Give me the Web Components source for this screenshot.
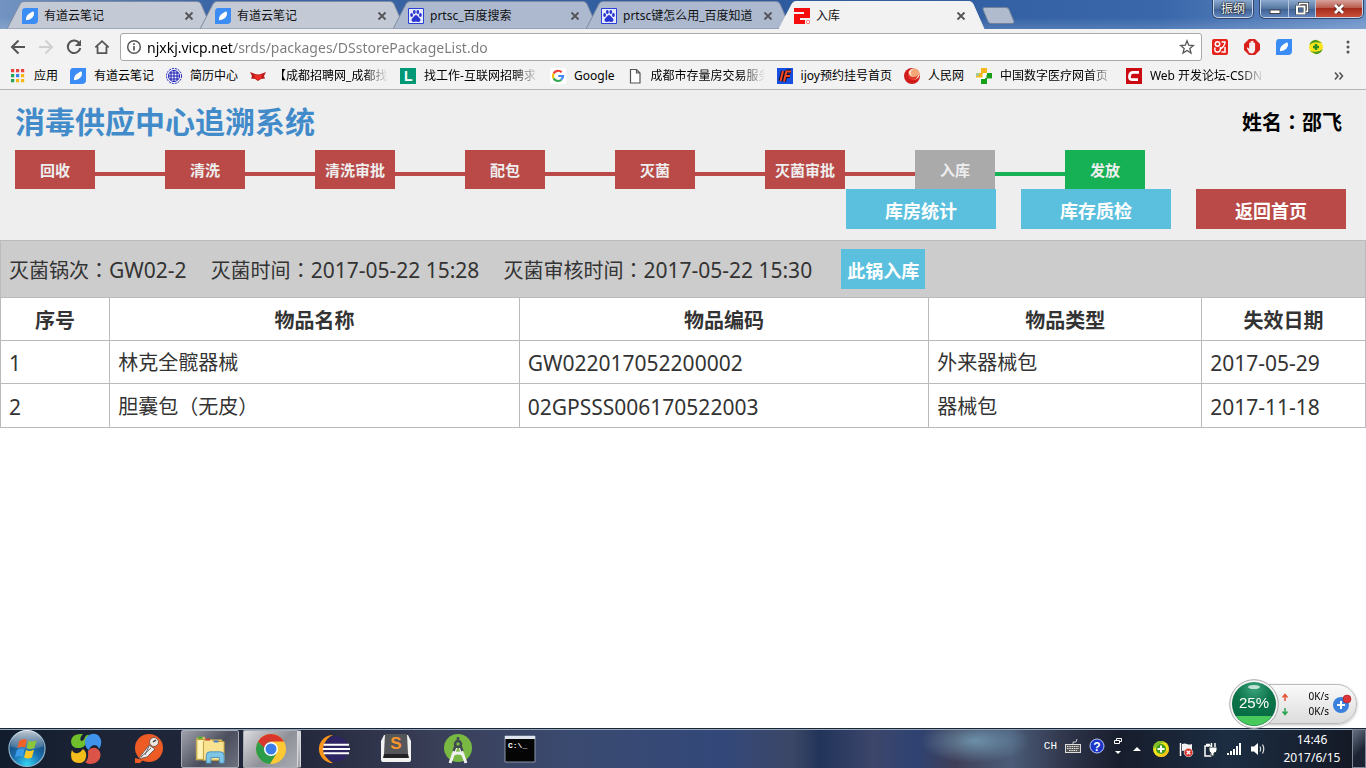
<!DOCTYPE html>
<html lang="zh-CN">
<head>
<meta charset="utf-8">
<title>入库</title>
<style>
html,body{height:100%}
body{margin:0;font-family:"Noto Sans","Noto Sans CJK SC",sans-serif;font-size:12px;color:#000;background:#fff}
</style>
</head>
<body>
<app-desktop></app-desktop>
<script>
const ICONS = {
  note: ['0 0 16 16', '<path d="M3 0h13v12q0 4-4 4H0V4Q0 0 3 0z" fill="#3b8df5"/><path d="M4 12.200q-.5-4 3-6.500l3.500-2.200q1-.3 1.400.8.8 3.200-1.600 5.400Q8 11.900 4 12.200z" fill="#fff"/>'],
  baidu: ['0 0 16 16', '<path d="M.5.500h15v15H.5z" fill="#e8ecff" stroke="#2a3fd8"/><g fill="#2a36d0"><ellipse cx="3.600" cy="7" rx="1.400" ry="1.900"/><ellipse cx="6.300" cy="4" rx="1.400" ry="1.900"/><ellipse cx="9.800" cy="4" rx="1.400" ry="1.900"/><ellipse cx="12.400" cy="7" rx="1.400" ry="1.900"/><path d="M8 7q1.300 0 2.200 1.700.6.900 1.700 1.700 1.300 1.600.2 2.900-1.200 1-4.100.3-2.900.7-4.100-.3-1.100-1.300.2-2.900 1.100-.8 1.700-1.700Q6.700 7 8 7z"/></g>'],
  store: ['0 0 16 16', '<path d="M0 0h16v10H6v2h5v4H0V6h10V4H0z" fill="#f50d0d"/><path d="M12 12h4v4h-4z" fill="#f77"/><path d="M12.500 12.500l3 3m0-3l-3 3" stroke="#fff"/>'],
  close: ['0 0 10 10', '<path d="M1.500 1.500l7 7m0-7l-7 7" stroke="#555" stroke-width="1.800" fill="none"/>'],
  back: ['0 0 16 16', '<path d="M15 8H2m6.500-6.500L2 8l6.500 6.500" stroke="#555" stroke-width="2" fill="none"/>'],
  forward: ['0 0 16 16', '<path d="M1 8h13M7.500 1.500L14 8l-6.500 6.500" stroke="#d0d0d0" stroke-width="2" fill="none"/>'],
  reload: ['0 0 16 16', '<path d="M13.500 4.500A6.300 6.300 0 1 0 14.300 9" stroke="#555" stroke-width="2" fill="none"/><path d="M15 .8v6.200H8.800z" fill="#555"/>'],
  home: ['0 0 18 16', '<path d="M1.500 8.500L9 1.500l7.500 7M4 7.500V15h10V7.500" stroke="#555" stroke-width="2" fill="none"/>'],
  info: ['0 0 16 16', '<circle cx="8" cy="8" r="6.300" stroke="#555" stroke-width="1.500" fill="none"/><path d="M8 7v4.500M8 4.200v1.800" stroke="#555" stroke-width="1.700"/>'],
  star: ['0 0 16 16', '<path d="M8 1.800l1.700 4.400 4.700.3-3.600 3 1.200 4.600L8 11.500l-4 2.600 1.200-4.600-3.600-3 4.700-.3z" fill="none" stroke="#555" stroke-width="1.300"/>'],
  capture: ['0 0 16 16', '<rect width="16" height="16" rx="2" fill="#e6241c"/><g fill="none" stroke="#fff" stroke-width="1.500"><circle cx="5.500" cy="5" r="2.200"/><path d="M9.500 3H13q0 4-4.500 7M3 8.500q-1 4.500 2.500 4.500Q9 13 8.500 8M13 8v5H9.500"/></g>'],
  adblock: ['0 0 16 16', '<path d="M5 0h6l5 5v6l-5 5H5l-5-5V5z" fill="#d8201c"/><path d="M5.500 14L3 9.500q-.4-1.400 1-.8l1.200 1V4q.8-1 1.400 0V2.500q.8-1 1.500 0V2q.8-.8 1.500.3V4q.9-.7 1.500.4V11q-.6 3-2.600 3.500z" fill="#f5eeee"/>'],
  360: ['0 0 16 16', '<circle cx="8" cy="8" r="7" fill="#fae51c"/><path d="M1.500 6A7 7 0 0 1 8 .8L14 4 10 3.500Q5 2.500 1.500 6zM14.500 10A7 7 0 0 1 8 15.200L2 12l4 .7q5 .8 8.500-2.700z" fill="#4c9a22"/><path d="M6.800 5h2.400v1.800H11v2.400H9.200V11H6.800V9.200H5V6.800h1.800z" fill="#288c20"/>'],
  dots: ['0 0 4 16', '<g fill="#555"><circle cx="2" cy="3" r="1.500"/><circle cx="2" cy="8" r="1.500"/><circle cx="2" cy="13" r="1.500"/></g>'],
  apps: ['0 0 16 16', '<path d="M1 1h3.200v3.200H1zM6 1h3.200v3.200H6zM11 1h3.200v3.200H11z" fill="#e8453c"/><path d="M1 6h3.200v3.200H1zM1 11h3.200v3.200H1z" fill="#24a350"/><path d="M6 6h3.200v3.200H6z" fill="#3d82f3"/><path d="M6 11h3.200v3.200H6zM11 6h3.200v3.200H11zM11 11h3.200v3.200H11z" fill="#fbb514"/>'],
  globe: ['0 0 16 16', '<circle cx="8" cy="8" r="7.500" fill="#f4f6ff" stroke="#1818b0" stroke-dasharray="2 1"/><g fill="none" stroke="#1818b0"><circle cx="8" cy="8" r="5.500"/><path d="M4 5h8M3 8h10M4 11h8M8 2v12M5 4v8M11 4v8"/></g>'],
  fox: ['0 0 16 16', '<path d="M0 4l4 1.500Q8 7.500 12 5.500L16 4l-2 4 1 2.500-4 .5-3 2-3-2-4-.5L2 8z" fill="#b81c1c"/><path d="M4 6.500l4 1 4-1-1 4L8 12l-3-1.500z" fill="#f02a25"/>'],
  lagou: ['0 0 16 16', '<path d="M0 0h16v16H0z" fill="#019875"/><text x="4" y="13" font-family="Liberation Sans" font-size="14" font-weight="bold" fill="#fff">L</text>'],
  google: ['0 0 16 16', '<rect width="16" height="16" rx="2" fill="#fff"/><g fill="none" stroke-width="2.200"><path d="M11.700 4.300A5 5 0 0 0 3.600 5.600" stroke="#ea4335"/><path d="M3.600 5.600a5 5 0 0 0 0 4.800" stroke="#fbbc05"/><path d="M3.600 10.400a5 5 0 0 0 7.700 1.300" stroke="#34a853"/><path d="M11.300 11.700A5 5 0 0 0 13 8H8.300" stroke="#4285f4"/></g>'],
  page: ['0 0 16 16', '<path d="M3.500 1.500h6l3.500 3.500v10H3.500zM9.500 1.500V5H13" fill="#fff" stroke="#555" stroke-width="1.200"/>'],
  ijoy: ['0 0 16 16', '<path d="M0 0h16v16H0z" fill="#174fe0"/><path d="M6 3L3.500 13M9.500 3L7 13.500M9 3.500h5M8.500 8H13" stroke="#101030" stroke-width="4" fill="none"/><path d="M6 3L3.500 13M9.500 3L7 13.500M9 3.500h5M8.500 8H13" stroke="#f4471f" stroke-width="2" fill="none"/>'],
  people: ['0 0 16 16', '<circle cx="8" cy="8" r="8" fill="#d11b1b"/><circle cx="10" cy="6" r="5.700" fill="#fbe7cf"/><circle cx="11" cy="5" r="4.300" fill="#f4a878"/><path d="M5 2q-1 6 4 7 3 .4 5-2-1 5-5.500 5Q2 11 5 2z" fill="#e4372a"/>'],
  medical: ['0 0 16 16', '<path d="M5 0h6v5h5v6h-5v5H5v-5H0V5h5z" fill="#fff"/><path d="M5 0h6v5H7v4.500H0V5h5z" fill="#f5b81c"/><path d="M11 5h5v5.500h-5V16H5v-5h4V7h2z" fill="#18a018"/><path d="M6.500 6h4v4h-4z" fill="#fff"/><path d="M0 5h3v3H0z" fill="#a4ca9c"/>'],
  csdn: ['0 0 16 16', '<path d="M0 0h16v16H0z" fill="#cb0a12"/><path d="M13 4.300H7q-3 0-3.500 3.700t3 3.700H12" stroke="#fff" stroke-width="2.800" fill="none"/>'],
  more: ['0 0 10 10', '<path d="M1 1.500L4 5 1 8.500M5.500 1.500l3 3.500-3 3.500" fill="none" stroke="#555" stroke-width="1.600"/>'],
  min: ['0 0 14 14', '<rect x="2" y="8" width="10" height="3.500" fill="#fff" stroke="#444"/>'],
  restore: ['0 0 14 14', '<path d="M4.500 3V1.500h8v8H11" fill="none" stroke="#333" stroke-width="3"/><path d="M4.500 3V1.500h8v8H11" fill="none" stroke="#fff" stroke-width="1.500"/><rect x="2" y="4.500" width="7.500" height="7" fill="#4a6a9a" stroke="#333" stroke-width="3"/><rect x="2" y="4.500" width="7.500" height="7" fill="none" stroke="#fff" stroke-width="2"/>'],
  shut: ['0 0 14 14', '<path d="M3.500 3.500l7 7m0-7l-7 7" stroke="#522" stroke-width="4.500"/><path d="M3 3l8 8m0-8l-8 8" stroke="#fff" stroke-width="2.700"/>'],
  orb: ['0 0 40 40', '<defs><radialGradient id="a" cx=".5" cy=".95" r=".9"><stop offset="0" stop-color="#35d5f5"/><stop offset=".45" stop-color="#1b6fae"/><stop offset="1" stop-color="#16395f"/></radialGradient><linearGradient id="b" x2="0" y2="1"><stop offset="0" stop-color="#fff" stop-opacity=".75"/><stop offset="1" stop-color="#fff" stop-opacity=".1"/></linearGradient></defs><circle cx="20" cy="20" r="18.500" fill="url(#a)" stroke="#8fb4cc" stroke-width="1.200"/><path d="M3 18a17 17 0 0 1 34 0Q20 24 3 18z" fill="url(#b)"/><path d="M12 12q4-3 8-.8L18 19q-4-2-8 .7z" fill="#f0622a"/><path d="M21.500 11.800q4 2 8.500-.3L27.500 19.500q-4 2.300-8 .1z" fill="#8cc63a"/><path d="M9.500 21.500q4-2.700 8-.7L15.500 28.500q-4-2-8 .7z" fill="#3a9be8"/><path d="M19 21.500q4 2 8.200-.2L25 29.200q-4 2.200-8 .1z" fill="#fcc927"/>'],
  pinwheel: ['0 0 32 32', '<path d="M13 1Q2 0 1 8q0 8 9 7 6-1 6-7 0-3 3-6-2-1-4 2-1 4-4 4-2-3 2-7z" fill="#6fc02b"/><path d="M19 2q9-4 12 5 1 5-2 9-1-4-5-4-4 1-5 5-4-2-4-8 0-4 4-7z" fill="#3f93ea"/><path d="M2 17q2 4 6 3 3-1 5-4 4 3 3 8-1 6-7 6-8 0-8-8 0-3 1-5z" fill="#f3bd1b"/><path d="M18 18q3-4 8-3 6 3 4 10-3 6-10 6-3 0-5-2 4-2 3-11z" fill="#dc5448"/>'],
  postman: ['0 0 32 32', '<circle cx="17" cy="15" r="14" fill="#ef5b25"/><path d="M3 25v5h5l3-3z" fill="#ef5b25"/><path d="M7 25L17 12l6 4-8 8q-6 2-8 1z" fill="#eee" stroke="#7a5a50"/><path d="M9 24l10-9M17 13l-4 9" stroke="#666" fill="none"/><circle cx="22" cy="9" r="4.500" fill="#f0e6e0" stroke="#7a5a50"/><path d="M21 9l3-2" stroke="#333" stroke-width="1.500"/>'],
  folder: ['0 0 34 32', '<path d="M2 6l2-3h7l2 3h17v22H2z" fill="#e0c05a"/><path d="M3 6h10v21H3z" fill="#fff2b4" stroke="#b99b3c"/><path d="M10 8l2-2h7l2 2h11v20H10z" fill="#f9e391" stroke="#b99b3c"/><path d="M4 3h5v2H4z" fill="#35a435"/><path d="M12 5h5v2h-5z" fill="#d0402f"/><path d="M21 7h5v2h-5z" fill="#3b79cf"/><path d="M13 31v-8q0-4 4-4h11q4 0 4 4v8h-5v-6h-9v6z" fill="#7fc5e8" stroke="#4d90b9"/>'],
  chrome: ['0 0 32 32', '<circle cx="16" cy="16" r="15" fill="#fcc934"/><path d="M3 8.500A15 15 0 0 0 15 31l7-11.500L10 19.500z" fill="#2c9c4a"/><path d="M3 8.500l6.500 11H16v-11z" fill="#2c9c4a"/><path d="M3 8.500A15 15 0 0 1 29 8.500H16Q11 9 9.500 15z" fill="#d9372c"/><circle cx="16" cy="16" r="7" fill="#fff"/><circle cx="16" cy="16" r="5.500" fill="#3b7de8"/>'],
  eclipse: ['0 0 34 32', '<path d="M16 1A15 15 0 0 0 16 31Q8 27 7 16T16 1z" fill="#f79419"/><circle cx="19" cy="16" r="13.500" fill="#2f2463"/><path d="M6 11.500h27M5 16h29M6 20.500h27" stroke="#fff" stroke-width="2.200"/>'],
  sublime: ['0 0 32 32', '<path d="M1 8l3-6h24l3 6v19q0 2-2 2H3q-2 0-2-2z" fill="#f2f2f2"/><path d="M5 1h22l1 20H4z" fill="#55565a"/><path d="M4 21h24l1 4H3z" fill="#222"/><text x="16" y="16" text-anchor="middle" font-family="Liberation Sans" font-size="17" font-weight="bold" fill="#f8952c">S</text>'],
  android: ['0 0 32 32', '<circle cx="16" cy="15" r="14" fill="#78b843"/><path d="M14.500 13L8 30M17.500 13L24 30M10 22q6-4 12 0" fill="none" stroke="#eef1ee" stroke-width="3"/><circle cx="16" cy="11" r="3" fill="none" stroke="#404a50" stroke-width="2.500"/><path d="M16 4v4M13.500 13l-2 5M18.500 13l2 5" stroke="#404a50" stroke-width="2.500"/>'],
  cmd: ['0 0 32 28', '<path d="M1 1h30v26H1z" fill="#050505" stroke="#8b98a8"/><path d="M1 1h30v3H1z" fill="#dde4ee"/><text x="4" y="13" font-family="Liberation Mono" font-size="8" font-weight="bold" fill="#fff">C:\\_</text>'],
  keyboard: ['0 0 16 16', '<path d="M8 6V4h3l1-3" stroke="#ccc" fill="none"/><rect x=".5" y="6.500" width="15" height="8" fill="#555" stroke="#ddd"/><path d="M2 8.500h12M2 10.500h12M4 12.500h8" stroke="#eee" stroke-dasharray="1.500 .8"/>'],
  help: ['0 0 16 16', '<circle cx="8" cy="8" r="7" fill="#1c35c8" stroke="#b9c4f0"/><text x="8" y="12.500" text-anchor="middle" font-family="Liberation Sans" font-size="12" font-weight="bold" fill="#fff">?</text>'],
  lang: ['0 0 10 18', '<path d="M3.500 3V1.500h5v3H7M1.500 3.500h5v3h-5z" fill="none" stroke="#fff"/><path d="M2 14h6l-3 3z" fill="#fff"/>'],
  up: ['0 0 8 8', '<path d="M0 6h8L4 2z" fill="#fff"/>'],
  guard: ['0 0 18 18', '<circle cx="9" cy="9" r="8" fill="#f3e31a"/><path d="M1 9A8 8 0 0 1 9 1l5 1.500Q7 2.500 4 7z" fill="#7fbf2c"/><path d="M17 9a8 8 0 0 1-8 8l-5-1.500q7 0 10-4.500z" fill="#f5c21a"/><circle cx="9" cy="9" r="5" fill="#3f9a1e"/><path d="M9 5.500v7M5.500 9h7" stroke="#fff" stroke-width="2"/>'],
  flag: ['0 0 16 16', '<path d="M2.500 2v13" stroke="#fff" stroke-width="1.500"/><path d="M4 3q3-1 5 0t5 0v7q-3 1-5 0t-5 0z" fill="#f3f3f3"/><circle cx="10.500" cy="11.500" r="4.300" fill="#d8322a" stroke="#fff" stroke-width=".6"/><path d="M8.700 9.700l3.600 3.600m0-3.600l-3.600 3.600" stroke="#fff" stroke-width="1.300"/>'],
  plug: ['0 0 16 16', '<path d="M4 3.500h4M3 5h6v10H3z" stroke="#fff" stroke-width="1.500" fill="none"/><path d="M7 6h8v3q0 3-3 3v3H9v-3Q7 11 7 9z" fill="#fff" stroke="#233"/><path d="M9.500 2v4m3.500-4v4" stroke="#fff" stroke-width="1.500"/>'],
  signal: ['0 0 16 16', '<path d="M1 12h2v2H1zM4 10h2v4H4zM7 8h2v6H7zM10 5h2v9h-2zM13 2h2v12h-2z" fill="#fff"/>'],
  speaker: ['0 0 16 16', '<path d="M1 5.500h3L8 2v12L4 10.500H1z" fill="#fff"/><path d="M10 5.500q1.500 2.500 0 5M12.500 3.500q2.500 4.500 0 9" stroke="#ddd" fill="none" stroke-width="1.200"/>'],
  arrowUp: ['0 0 8 8', '<path d="M4 8V2M1.500 4.500L4 1.500l2.500 3" stroke="#e8533a" stroke-width="1.500" fill="none"/>'],
  arrowDown: ['0 0 8 8', '<path d="M4 0v6M1.500 3.500L4 6.500l2.500-3" stroke="#2ba352" stroke-width="1.500" fill="none"/>'],
  boost: ['0 0 20 20', '<circle cx="9" cy="11" r="8" fill="#3a80dd"/><path d="M9 7v8M5 11h8" stroke="#fff" stroke-width="2"/><circle cx="15" cy="5" r="4" fill="#dc3438" stroke="#a61b20" stroke-width=".6"/>'],
  ball: ['0 0 50 50', '<defs><radialGradient id="g" cx=".5" cy=".15" r=".8"><stop offset="0" stop-color="#3ba37c"/><stop offset=".5" stop-color="#0c7449"/><stop offset="1" stop-color="#066a42"/></radialGradient><clipPath id="c"><circle cx="25" cy="25" r="21.500"/></clipPath></defs><circle cx="25" cy="25" r="24.300" fill="#f4f4f4" stroke="#a9a9a9"/><circle cx="25" cy="25" r="22" fill="url(#g)"/><path d="M0 37h50v13H0z" fill="#48c95c" clip-path="url(#c)"/><ellipse cx="25" cy="8" rx="6" ry="2" fill="#fff" opacity=".7"/>']
};

const define = (name, css, html, setup) => {
  const tpl = document.createElement('template');
  tpl.innerHTML = `<style>*{box-sizing:border-box}button,input{font:inherit;margin:0}${css}</style>${html}`;
  customElements.define(name, class extends HTMLElement {
    connectedCallback() {
      if (this.shadowRoot) return;
      this.attachShadow({mode: 'open'}).append(tpl.content.cloneNode(true));
      if (setup) setup(this, this.shadowRoot);
    }
  });
};

define('ui-icon', ':host{display:block;flex:none;width:16px;height:16px}svg{display:block;width:100%;height:100%}', '<svg aria-hidden="true"></svg>', (el, root) => {
  const [box, body] = ICONS[el.getAttribute('name')];
  const svg = root.querySelector('svg');
  svg.setAttribute('viewBox', box);
  svg.innerHTML = body;
});

define('browser-tab', `
:host{display:flex;position:relative;flex:0 1 209px;min-width:0;height:28px;margin-right:-16px;--fill:#c3cad6}
:host([tone=deep]){--fill:#acb9cf}
:host([active]){--fill:#f2f2f2;z-index:1}
.shape{position:absolute;inset:0;width:100%;height:100%}
.side{fill:var(--fill);stroke:#7e8ba2}
:host([active]) .side{stroke:#f2f2f2}
.row{position:relative;display:flex;align-items:center;gap:6px;width:100%;padding:2px 20px 0 15px}
.label{flex:1;min-width:0;height:18px;line-height:18px;overflow:hidden;white-space:nowrap;text-align:left;padding:0;border:0;background:none;color:#111}
.x{display:flex;padding:0;border:0;background:none;margin-right:2px}
.x ui-icon{width:10px;height:10px}`,
`<svg class="shape" viewBox="0 0 209 28" preserveAspectRatio="none" aria-hidden="true"><path class="side" d="M0 28L13 3Q14 .5 17 .5H190Q193 .5 194 3L205 28z"/></svg>
<div class="row"><slot name="icon"></slot><button class="label"><slot></slot></button><button class="x" aria-label="关闭标签页"><ui-icon name="close"></ui-icon></button></div>`);

define('window-controls', `
:host{display:flex;align-items:flex-start;gap:7px;margin-left:auto;padding-right:3px;flex:none}
button{border:0;padding:0;display:flex;align-items:center;justify-content:center;height:17px;background:linear-gradient(#8da9cf,#55779f 50%,#3e5f92 51%,#5f84bb)}
.user,.group{border:1px solid #c9d6ea;border-top:0;border-radius:0 0 5px 5px;overflow:hidden;box-shadow:0 0 0 1px #30466b}
.user{width:40px;height:18px;color:#fff;text-shadow:0 0 2px #000,0 0 2px #000;line-height:16px}
.group{display:flex}
.group button{width:28px;border-right:1px solid #b5c4dc}
.group button.r{width:27px}
.group button.c{width:46px;border:0;background:linear-gradient(#d7a29a,#b9594c 48%,#a52c1b 50%,#c8503a)}
ui-icon{width:14px;height:14px}`,
`<button class="user">振纲</button><div class="group"><button aria-label="最小化"><ui-icon name="min"></ui-icon></button><button class="r" aria-label="还原"><ui-icon name="restore"></ui-icon></button><button class="c" aria-label="关闭"><ui-icon name="shut"></ui-icon></button></div>`);

define('tab-strip', `
:host{display:flex;align-items:flex-start;height:29px;padding-left:7px;background:linear-gradient(#0000 60%,#cfe0f530),linear-gradient(90deg,#7394c2,#3c66a5 15%,#2e5b9e 60%,#3967aa 85%,#6d93c8)}
.tabs{display:flex;flex:0 1 965px;padding-top:1px;min-width:0}
.new{flex:none;margin:7px 0 0 9px;padding:0;border:0;background:none;width:34px;height:17px}
.new svg{display:block}`,
`<div class="tabs"><slot></slot></div><button class="new" aria-label="新标签页"><svg width="34" height="17" viewBox="0 0 34 17"><path d="M3 .5h22q2 0 3 2l5 12q0 2-2 2H10q-2 0-3-2l-5-12q0-2 1-2z" fill="#b0bccd" stroke="#74839c"/></svg></button><window-controls></window-controls>`);

define('address-bar', `
:host{display:flex;align-items:center;height:32px;padding:4px 10px 0 10px;background:#f2f2f2}
button{display:flex;border:0;padding:0;background:none;flex:none}
nav{display:flex;gap:12px;padding-right:10px}
.box{flex:1;min-width:0;display:flex;align-items:center;gap:5px;height:28px;padding:0 6px 0 5px;background:#fff;border:1px solid #a9a9a9;border-radius:3px}
input{flex:1;min-width:0;height:24px;padding:0;border:0;outline:0;font-family:"Noto Sans",sans-serif;font-size:14px;color:#777;background:linear-gradient(90deg,#000 87px,#7b7b7b 87px);-webkit-background-clip:text;background-clip:text;-webkit-text-fill-color:transparent}
.ext{display:flex;gap:16px;padding-left:10px}`,
`<nav aria-label="导航"><button aria-label="后退"><ui-icon name="back"></ui-icon></button><button aria-label="前进"><ui-icon name="forward"></ui-icon></button><button aria-label="重新加载"><ui-icon name="reload"></ui-icon></button><button aria-label="主页"><ui-icon name="home"></ui-icon></button></nav>
<div class="box"><ui-icon name="info"></ui-icon><input type="text" aria-label="地址" value="njxkj.vicp.net/srds/packages/DSstorePackageList.do"><button aria-label="加入书签"><ui-icon name="star"></ui-icon></button></div>
<div class="ext"><button aria-label="截图"><ui-icon name="capture"></ui-icon></button><button aria-label="广告拦截"><ui-icon name="adblock"></ui-icon></button><button aria-label="云笔记"><ui-icon name="note"></ui-icon></button><button aria-label="安全"><ui-icon name="360"></ui-icon></button><button aria-label="菜单"><ui-icon name="dots"></ui-icon></button></div>`);

define('bookmark-link', `
:host{display:block;flex:none}
a{display:flex;align-items:center;gap:8px;color:#000;text-decoration:none;line-height:18px}
span{max-width:114px;overflow:hidden;white-space:nowrap}
:host([cut]) span{width:114px;-webkit-mask:linear-gradient(90deg,#000 90px,#0000 114px);mask:linear-gradient(90deg,#000 90px,#0000 114px)}`,
`<a href="#"><span><slot></slot></span></a>`, (el, root) => {
  const icon = document.createElement('ui-icon');
  icon.setAttribute('name', el.getAttribute('icon'));
  root.querySelector('a').prepend(icon);
});

define('bookmark-bar', `
:host{display:flex;align-items:center;gap:12px;height:29px;padding:1px 22px 0 10px;background:#f2f2f2;border-bottom:1px solid #b6b4b6}
button{margin-left:auto;border:0;padding:0;background:none}ui-icon{width:10px;height:10px}`,
`<slot></slot><button aria-label="更多书签"><ui-icon name="more"></ui-icon></button>`);

define('flow-step', `
:host{display:flex;align-items:center;--line:#b94a48}
:host::before{content:"";width:70px;height:4px;margin-top:9px;background:var(--line)}
:host([first])::before{display:none}
button{width:80px;height:39px;padding:0;border:0;background:#b94a48;color:#eee;font-size:15px;font-weight:bold;white-space:nowrap}
:host([state=current]) button{background:#aaa}
:host([state=next]){--line:#16b055}
:host([state=next]) button{background:#16b055}`, `<button><slot></slot></button>`);

define('action-button', `
:host{display:block}
button{width:150px;height:40px;padding:4px 0 0;border:0;background:#5bc0de;color:#fff;font-size:18px;font-weight:bold;line-height:24px;white-space:nowrap}
:host([compact]) button{width:84px}
:host([danger]) button{background:#b94a48}`, `<button><slot></slot></button>`);

/* Full-width punctuation whose mark sits in the middle of its cell. */
define('mid-mark', ':host{font-family:"Noto Sans CJK TC",sans-serif}', '<span lang="zh-TW"><slot></slot></span>');

define('page-header', `
:host{display:block;background:#eee;padding:13px 20px 11px 15px}
.top{display:flex;justify-content:space-between;align-items:center;height:38px;padding-right:4px}
h1{margin:0;font-size:30px;line-height:38px;color:#428bca}
.user{font-size:20px;font-weight:bold;line-height:28px}
.flow{display:flex;margin-top:9px}
.actions{display:flex;justify-content:flex-end;gap:25px}`,
`<div class="top"><h1>消毒供应中心追溯系统</h1><div class="user">姓名<mid-mark lang="zh-TW">：</mid-mark>邵飞</div></div>
<div class="flow"><flow-step first>回收</flow-step><flow-step>清洗</flow-step><flow-step>清洗审批</flow-step><flow-step>配包</flow-step><flow-step>灭菌</flow-step><flow-step>灭菌审批</flow-step><flow-step state="current">入库</flow-step><flow-step state="next">发放</flow-step></div>
<div class="actions"><action-button>库房统计</action-button><action-button>库存质检</action-button><action-button danger>返回首页</action-button></div>`);

define('batch-bar', `
:host{display:flex;align-items:center;gap:24px;height:57px;padding:0 8px;background:#ccc;border:1px solid #bbb;border-bottom:0;color:#333;font-size:20px;line-height:28px;white-space:nowrap}
.info{padding-top:2px}
b{font-weight:normal;font-size:21px}
action-button{padding-left:5px}`,
`<span class="info">灭菌锅次<mid-mark lang="zh-TW">：</mid-mark><b>GW02-2</b></span><span class="info">灭菌时间<mid-mark lang="zh-TW">：</mid-mark><b>2017-05-22 15:28</b></span><span class="info">灭菌审核时间<mid-mark lang="zh-TW">：</mid-mark><b>2017-05-22 15:30</b></span><action-button compact>此锅入库</action-button>`);

define('package-table', `
:host{display:block;color:#333;font-size:20px}
table{width:100%;table-layout:fixed;border-collapse:collapse}
th,td{height:43px;border:1px solid #bbb;padding:9px 8px 7px;line-height:26px;text-align:left}
th{text-align:center;padding:10px 8px 6px}
.n{font-size:21px}
.w1{width:8%}.w2{width:30%}.w3{width:20%}.w4{width:12%}`,
`<table><colgroup><col class="w1"><col class="w2"><col class="w2"><col class="w3"><col class="w4"></colgroup>
<thead><tr><th>序号</th><th>物品名称</th><th>物品编码</th><th>物品类型</th><th>失效日期</th></tr></thead>
<tbody><tr><td class="n">1</td><td>林克全髋器械</td><td class="n">GW022017052200002</td><td>外来器械包</td><td class="n">2017-05-29</td></tr>
<tr><td class="n">2</td><td>胆囊包<mid-mark lang="zh-TW">（</mid-mark>无皮<mid-mark lang="zh-TW">）</mid-mark></td><td class="n">02GPSSS006170522003</td><td>器械包</td><td class="n">2017-11-18</td></tr></tbody></table>`);

define('speed-ball', `
:host{position:fixed;right:9px;bottom:39px;display:flex;align-items:center;z-index:2}
.ball{position:relative;width:50px;height:50px;z-index:1}
.ball ui-icon{width:50px;height:50px}
.ball span{position:absolute;inset:0;text-align:center;font:15px/48px "Liberation Sans",sans-serif;color:#fff}
.pill{display:flex;align-items:center;gap:3px;width:103px;height:40px;margin-left:-25px;padding:0 4px 0 26px;border:1px solid #bbb;border-radius:0 20px 20px 0;background:linear-gradient(#fafafa,#dcdcdc);box-shadow:0 1px 3px #0004}
.rates{flex:1;display:grid;grid-template-columns:8px 1fr;align-items:center;font-size:10px;line-height:15px;text-align:right}
.rates ui-icon{width:8px;height:8px}
.plus{width:20px;height:20px}`,
`<div class="ball"><ui-icon name="ball"></ui-icon><span>25%</span></div><div class="pill"><div class="rates"><ui-icon name="arrowUp"></ui-icon><span>0K/s</span><ui-icon name="arrowDown"></ui-icon><span>0K/s</span></div><ui-icon class="plus" name="boost"></ui-icon></div>`);

define('task-item', `
:host{display:block;flex:0 0 62px}
button{display:flex;align-items:center;justify-content:center;width:58px;height:38px;margin:1px 2px;padding:0;border:1px solid transparent;border-radius:2px;background:none}
:host([open]) button{border-color:#a9acb5;background:linear-gradient(135deg,#a0a3ac,#4a4e5d 55%,#6e727f)}
:host([focused]) button{background:linear-gradient(135deg,#dcdce0,#8f9198 55%,#a9abb2);border-right:4px double #d5d6da}
::slotted(ui-icon){width:32px;height:32px}`, `<button><slot></slot></button>`);

define('task-bar', `
:host{display:flex;align-items:stretch;height:40px;border-top:1px solid #1a2433;box-shadow:inset 0 1px #93a8bd;color:#fff;background:
radial-gradient(ellipse 55px 22px at 975px 12px,#7fb0c8b0,#0000),
linear-gradient(90deg,#111c2c,#1d2436 8%,#23283d 22%,#3a3f58 32%,#3a4a70 42%,#33487a 53%,#3c4766 58%,#22345a 60%,#3d466b 64%,#2e4272 67%,#403f58 70%,#4b5c78 74%,#30364b 78%,#171d2c 82%,#1c2d42 90%,#131722)}
.start{display:block;flex:0 0 55px;border:0;background:none;padding:0 0 0 7px}
.start ui-icon{width:40px;height:39px}
.items{display:flex}
.tray{display:flex;align-items:center;margin-left:auto;gap:8px}
.ime{display:flex;align-items:center;align-self:flex-start;gap:8px;height:34px;padding-right:2px}
.ch{font:11px/16px "Liberation Mono",monospace}
.lang{width:10px;height:18px}.up{width:8px;height:8px;margin-right:3px}.guard{width:18px;height:18px}
time{width:64px;margin-left:6px;text-align:center;font-size:12px;line-height:18px;white-space:nowrap}
.desk{align-self:stretch;width:14px;padding:0;border:1px solid #7e8796;background:linear-gradient(135deg,#667082,#1c2433 60%)}`,
`<button class="start" aria-label="开始"><ui-icon name="orb"></ui-icon></button>
<div class="items"><slot></slot></div>
<div class="tray"><div class="ime"><span class="ch">CH</span><ui-icon name="keyboard"></ui-icon><ui-icon name="help"></ui-icon><ui-icon class="lang" name="lang"></ui-icon></div><ui-icon class="up" name="up"></ui-icon><ui-icon class="guard" name="guard"></ui-icon><ui-icon name="flag"></ui-icon><ui-icon name="plug"></ui-icon><ui-icon name="signal"></ui-icon><ui-icon name="speaker"></ui-icon><time datetime="2017-06-15T14:46">14:46<br>2017/6/15</time><button class="desk" aria-label="显示桌面"></button></div>`);

define('app-desktop', `
:host{display:flex;flex-direction:column;min-height:100vh;overflow:hidden}
main{flex:1}`,
`<tab-strip>
<browser-tab><ui-icon slot="icon" name="note"></ui-icon>有道云笔记</browser-tab>
<browser-tab><ui-icon slot="icon" name="note"></ui-icon>有道云笔记</browser-tab>
<browser-tab tone="deep"><ui-icon slot="icon" name="baidu"></ui-icon>prtsc_百度搜索</browser-tab>
<browser-tab tone="deep"><ui-icon slot="icon" name="baidu"></ui-icon>prtsc键怎么用_百度知道</browser-tab>
<browser-tab active><ui-icon slot="icon" name="store"></ui-icon>入库</browser-tab>
</tab-strip>
<address-bar></address-bar>
<bookmark-bar>
<bookmark-link icon="apps">应用</bookmark-link>
<bookmark-link icon="note">有道云笔记</bookmark-link>
<bookmark-link icon="globe">简历中心</bookmark-link>
<bookmark-link icon="fox" cut>【成都招聘网_成都找</bookmark-link>
<bookmark-link icon="lagou" cut>找工作-互联网招聘求</bookmark-link>
<bookmark-link icon="google">Google</bookmark-link>
<bookmark-link icon="page" cut>成都市存量房交易服务</bookmark-link>
<bookmark-link icon="ijoy">ijoy预约挂号首页</bookmark-link>
<bookmark-link icon="people">人民网</bookmark-link>
<bookmark-link icon="medical" cut>中国数字医疗网首页</bookmark-link>
<bookmark-link icon="csdn" cut>Web 开发论坛-CSDN</bookmark-link>
</bookmark-bar>
<main><page-header></page-header><batch-bar></batch-bar><package-table></package-table></main>
<speed-ball></speed-ball>
<task-bar>
<task-item><ui-icon name="pinwheel"></ui-icon></task-item>
<task-item><ui-icon name="postman"></ui-icon></task-item>
<task-item open><ui-icon name="folder"></ui-icon></task-item>
<task-item open focused><ui-icon name="chrome"></ui-icon></task-item>
<task-item><ui-icon name="eclipse"></ui-icon></task-item>
<task-item><ui-icon name="sublime"></ui-icon></task-item>
<task-item><ui-icon name="android"></ui-icon></task-item>
<task-item><ui-icon name="cmd"></ui-icon></task-item>
</task-bar>`);
</script>
</body>
</html>
